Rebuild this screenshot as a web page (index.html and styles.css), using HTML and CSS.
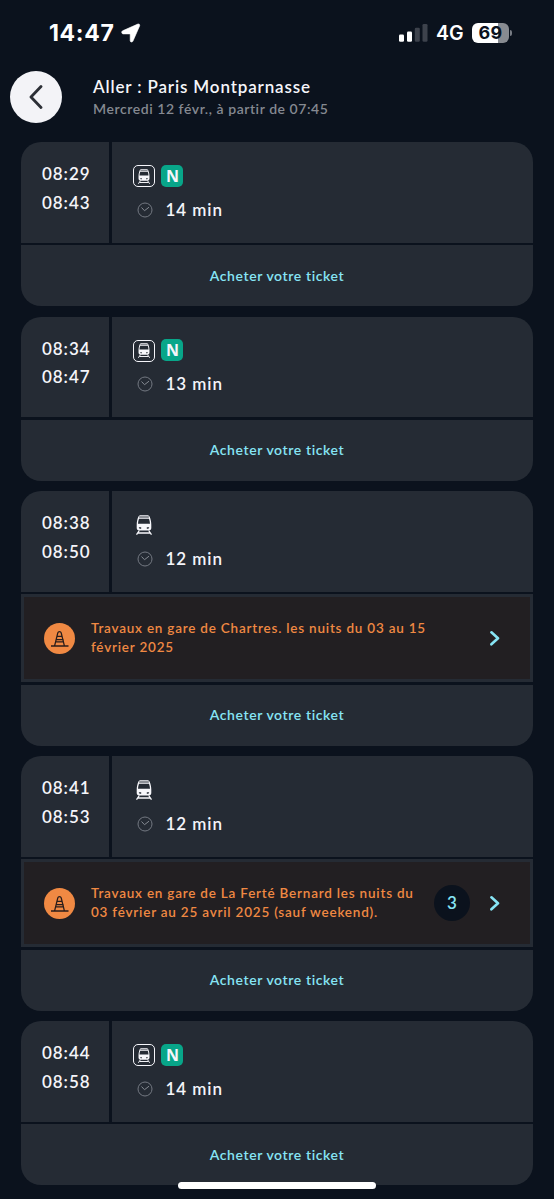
FILE: index.html
```html
<!DOCTYPE html>
<html lang="fr">
<head>
<meta charset="utf-8">
<title>Aller : Paris Montparnasse</title>
<link rel="stylesheet" href="styles.css">
</head>
<body>
<svg class="defs" width="0" height="0" aria-hidden="true">
  <symbol id="train" viewBox="0 0 16 20">
    <path fill="#f7f7fb" fill-rule="evenodd" d="M4.800 .3h6.400c1.300 0 2.100.6 2.600 1.700C14.700 4.200 15.300 7 15.300 9.700v3c0 1.700-.9 2.800-2.500 2.800H3.200C1.600 15.500.7 14.400.7 12.700v-3C.7 7 1.300 4.200 2.200 2 2.700.9 3.500.3 4.800.3zM3 3.800C2.400 5.400 2.100 7 2 8.800h12c-.1-1.800-.4-3.400-1-5z"/>
    <path fill="#252b34" d="M3.200 1.600h9.600v.8H3.200zM2.700 12.300h2.500v1.500H3.600zM13.300 12.300h-2.500v1.500h1.600z"/>
    <path stroke="#f7f7fb" stroke-width="1.300" fill="none" d="M3.300 15.500L.5 19.700M12.700 15.500l2.800 4.200M2 18h12"/>
  </symbol>
  <symbol id="clock" viewBox="0 0 16 16">
    <circle cx="8" cy="8" r="7" fill="none" stroke="#747982" stroke-width="1"/>
    <path d="M4.500 5.500L7.500 8.700 12 5.200" fill="none" stroke="#858a92" stroke-width="1"/>
  </symbol>
  <symbol id="cone" viewBox="0 0 31 31">
    <circle cx="15.500" cy="15.500" r="15.500" fill="#f08943"/>
    <path d="M7 23h17.500M10.600 22.800l3.200-13c.4-1.600 3-1.600 3.400 0l3.200 13M13 13.300h5M12 16.600h7l.4 2.200h-7.800" fill="none" stroke="#291d1b" stroke-width="1.300"/>
  </symbol>
  <symbol id="next" viewBox="0 0 12 16">
    <path d="M2.400 2.300L9 8.300l-6.600 6" fill="none" stroke="#87e5f5" stroke-width="2.600" stroke-linecap="round" stroke-linejoin="round"/>
  </symbol>
</svg>
<div class="screen">
  <div class="status">
    <span class="clock-time">14:47</span>
    <svg class="location" width="20" height="20" viewBox="0 0 20 20"><path d="M1.600 7.800L16.800 1.100c1.300-.5 2.300.5 1.800 1.800l-6.700 15.300c-.6 1.300-2.700 1-2.700-.5v-6.300c0-.3-.2-.5-.5-.5H2.100c-1.600 0-1.900-2.400-.5-3.100z" fill="#fff" stroke="#fff" stroke-width=".6"/></svg>
    <svg class="signal" width="29" height="18" viewBox="0 0 29 18"><rect y="10.500" width="5" height="7.300" rx="1.300" fill="#fff"/><rect x="8" y="7.500" width="5" height="10.300" rx="1.300" fill="#fff"/><rect x="15.800" y="3.700" width="5" height="14.100" rx="1.300" fill="#3d424c"/><rect x="23.500" y="0" width="5" height="17.800" rx="1.300" fill="#3d424c"/></svg>
    <span class="network">4G</span>
    <span class="battery"><span class="level">69</span></span>
    <span class="battery-tip"></span>
  </div>
  <header class="header">
    <button class="back" aria-label="Retour"><svg width="14" height="24" viewBox="0 0 14 24"><path d="M12 1.500L2 12l10 10.500" fill="none" stroke="#2c2f36" stroke-width="2.800" stroke-linecap="round" stroke-linejoin="round"/></svg></button>
    <div class="heading">
      <h1 class="title">Aller : Paris Montparnasse</h1>
      <p class="subtitle">Mercredi 12 févr., à partir de 07:45</p>
    </div>
  </header>
  <main class="trips">
    <article class="card">
      <div class="trip"><div class="times"><span>08:29</span><span>08:43</span></div>
        <div class="info"><div class="line"><span class="mode boxed"><svg><use href="#train"/></svg></span><span class="badge">N</span></div>
        <div class="duration"><svg><use href="#clock"/></svg><span>14 min</span></div></div></div>
      <a class="buy"><span>Acheter votre ticket</span></a>
    </article>
    <article class="card">
      <div class="trip"><div class="times"><span>08:34</span><span>08:47</span></div>
        <div class="info"><div class="line"><span class="mode boxed"><svg><use href="#train"/></svg></span><span class="badge">N</span></div>
        <div class="duration"><svg><use href="#clock"/></svg><span>13 min</span></div></div></div>
      <a class="buy"><span>Acheter votre ticket</span></a>
    </article>
    <article class="card">
      <div class="trip"><div class="times"><span>08:38</span><span>08:50</span></div>
        <div class="info"><div class="line"><span class="mode"><svg><use href="#train"/></svg></span></div>
        <div class="duration"><svg><use href="#clock"/></svg><span>12 min</span></div></div></div>
      <div class="alert"><svg class="cone"><use href="#cone"/></svg><p class="message">Travaux en gare de Chartres. les nuits du 03 au 15<br>février 2025</p><svg class="next"><use href="#next"/></svg></div>
      <a class="buy"><span>Acheter votre ticket</span></a>
    </article>
    <article class="card">
      <div class="trip"><div class="times"><span>08:41</span><span>08:53</span></div>
        <div class="info"><div class="line"><span class="mode"><svg><use href="#train"/></svg></span></div>
        <div class="duration"><svg><use href="#clock"/></svg><span>12 min</span></div></div></div>
      <div class="alert"><svg class="cone"><use href="#cone"/></svg><p class="message">Travaux en gare de La Ferté Bernard les nuits du<br>03 février au 25 avril 2025 (sauf weekend).</p><span class="count">3</span><svg class="next"><use href="#next"/></svg></div>
      <a class="buy"><span>Acheter votre ticket</span></a>
    </article>
    <article class="card">
      <div class="trip"><div class="times"><span>08:44</span><span>08:58</span></div>
        <div class="info"><div class="line"><span class="mode boxed"><svg><use href="#train"/></svg></span><span class="badge">N</span></div>
        <div class="duration"><svg><use href="#clock"/></svg><span>14 min</span></div></div></div>
      <a class="buy"><span>Acheter votre ticket</span></a>
    </article>
  </main>
  <div class="home-indicator"></div>
</div>
</body>
</html>
```
FILE: styles.css
```css
* { box-sizing: border-box; margin: 0; padding: 0; }
body { background: #0b121d; color: #f5f5fa; font-family: Lato, "Open Sans", sans-serif; }
svg { display: block; flex: none; }
.defs { display: none; }
.screen { position: relative; width: 554px; height: 1199px; overflow: hidden; }
.status { display: flex; align-items: center; height: 66px; padding-left: 49px; font-family: Inter, sans-serif; color: #fff; }
.clock-time { width: 72px; font-size: 23px; font-weight: 700; letter-spacing: .7px; white-space: nowrap; }
.location { margin-right: 258px; }
.signal { margin-right: 8px; }
.network { width: 36px; font-size: 19.5px; font-weight: 600; white-space: nowrap; }
.battery { width: 37px; height: 20px; border-radius: 6px; background: linear-gradient(90deg, #fff 70%, #888b91 70%); display: flex; align-items: center; justify-content: center; }
.level { color: #0b121d; font-size: 18px; line-height: 20px; font-weight: 700; letter-spacing: .3px; }
.battery-tip { width: 2px; height: 6px; margin-left: 1px; border-radius: 0 2px 2px 0; background: #777b83; }
.header { display: flex; align-items: flex-start; height: 76px; padding: 5px 10px 0; gap: 31px; }
.back { width: 52px; height: 52px; border: 0; border-radius: 50%; background: #f3f3f7; display: flex; align-items: center; justify-content: center; }
.heading { padding-top: 5px; white-space: nowrap; }
.title { font-size: 17px; line-height: 22px; font-weight: 600; letter-spacing: .85px; }
.subtitle { font-size: 14px; line-height: 21px; font-weight: 600; letter-spacing: .56px; color: #858991; }
.trips { display: flex; flex-direction: column; gap: 10.5px; padding: 0 21px; }
.card { display: flex; flex-direction: column; gap: 2.5px; border-radius: 20px; overflow: hidden; flex: none; }
.trip { display: grid; grid-template-columns: 88.4px 1fr; gap: 3px; height: 100.5px; }
.times, .info, .buy { background: #252b34; }
.times { padding: 18px 0 0 21px; display: flex; flex-direction: column; font-size: 17px; line-height: 28.5px; font-weight: 600; letter-spacing: .95px; }
.info { padding: 23px 0 0 21px; }
.line { display: flex; align-items: center; gap: 6px; height: 22px; }
.mode { width: 22px; height: 22px; display: flex; align-items: center; justify-content: center; }
.mode svg { width: 16px; height: 20px; }
.boxed { border: 1.5px solid #f5f5fa; border-radius: 5px; }
.mode.boxed svg { width: 12px; height: 15px; }
.badge { width: 22px; height: 22px; margin-top: -1px; border-radius: 5px; background: #08a689; font: 700 16px/22px "Open Sans", sans-serif; text-align: center; }
.duration { display: flex; align-items: center; gap: 12px; height: 24px; margin-top: 10px; padding-left: 4px; font-size: 17px; font-weight: 600; letter-spacing: .95px; }
.duration svg { width: 16px; height: 16px; margin-top: 1px; }
.buy { display: flex; align-items: center; justify-content: center; height: 61px; padding-bottom: 1px; color: #87e5f5; font-size: 14px; font-weight: 600; letter-spacing: .6px; }
.alert { display: flex; align-items: center; height: 88px; padding: 0 29px 0 20px; border: 3px solid #252b34; background: #221f22; color: #f08943; }
.cone { width: 31px; height: 31px; margin-right: 16px; }
.message { flex: 1; font-size: 13.5px; line-height: 19.3px; font-weight: 600; letter-spacing: .78px; white-space: nowrap; }
.count { width: 36px; height: 36px; margin-right: 19px; border-radius: 50%; background: #0b121d; color: #87e5f5; font-size: 17px; line-height: 36px; font-weight: 600; text-align: center; }
.next { width: 12px; height: 16px; }
.home-indicator { position: absolute; left: 178px; bottom: 10px; width: 198px; height: 7px; border-radius: 4px; background: #fff; }
```
